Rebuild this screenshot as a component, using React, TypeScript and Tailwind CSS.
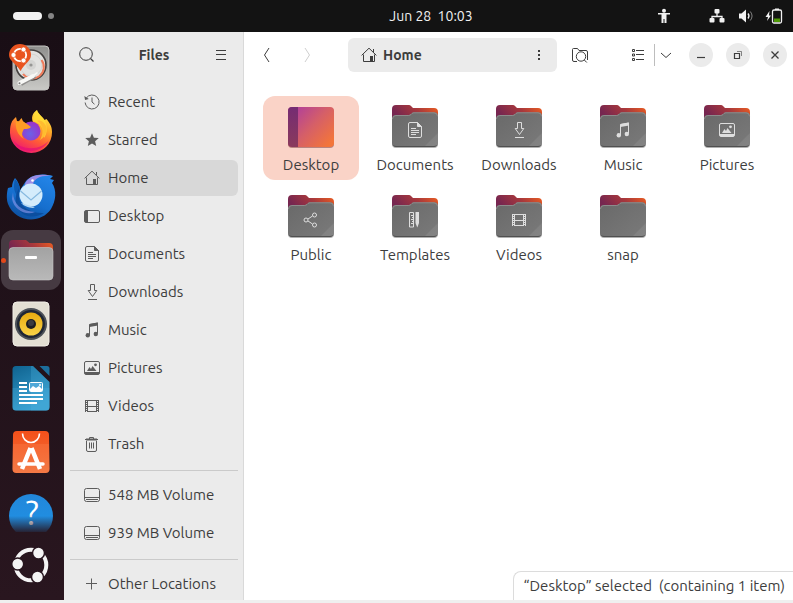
import React from "react";

type SymbolName =
  | "recent" | "star" | "home" | "desktop" | "document" | "download" | "music"
  | "picture" | "video" | "trash" | "drive" | "plus" | "share" | "template"
  | "search" | "menu" | "back" | "forward" | "dots" | "folderSearch" | "list"
  | "down" | "minimize" | "restore" | "close" | "person" | "network" | "sound" | "battery";

const glyphs: Record<SymbolName, React.ReactNode> = {
  recent: (
    <>
      <path d="M2.2 4.2A7 7 0 1 1 1.1 8.5" />
      <path d="M8 3.5V8l2.5 2.2" />
      <path d="M.3 2l.8 4 3.7-.9z" fill="currentColor" stroke="none" />
    </>
  ),
  star: <path d="M8 1.2l1.9 4.5 4.9.4-3.7 3.2 1.1 4.8L8 11.6l-4.2 2.5 1.1-4.8L1.2 6.1l4.9-.4z" fill="currentColor" stroke="none" />,
  home: (
    <>
      <path d="M.6 8.4L8 1.2l7.4 7.2" />
      <path d="M2.5 7.5v7h11v-7" />
      <path d="M12.5 2v3" />
      <path d="M9 9h3v5.5H9z" fill="currentColor" stroke="none" />
    </>
  ),
  desktop: (
    <>
      <rect x=".5" y="2.5" width="15" height="12" rx="1.5" />
      <path d="M1 3h3v11H1z" fill="currentColor" stroke="none" />
    </>
  ),
  document: (
    <>
      <path d="M3 .5h7.5l4 4V14a1.5 1.5 0 0 1-1.5 1.5H3A1.5 1.5 0 0 1 1.5 14V2A1.5 1.5 0 0 1 3 .5z" />
      <path d="M10.5 .5V4.5h4z" fill="currentColor" />
      <path d="M4 6.5h5M4 8.5h8M4 10.5h8M4 12.5h5" />
    </>
  ),
  download: (
    <>
      <path d="M6.5 .5h4v6h2.3L8.5 12.5 4.2 6.5h2.3z" />
      <path d="M4 15.5h9" />
    </>
  ),
  music: (
    <>
      <path d="M5.5 13V2.5l8-1.5v10.5" />
      <path d="M5.5 1.9l8.5-1.4v3l-8.5 1.4z" fill="currentColor" stroke="none" />
      <circle cx="3.8" cy="13.2" r="2.2" fill="currentColor" stroke="none" />
      <circle cx="11.8" cy="12" r="2.2" fill="currentColor" stroke="none" />
    </>
  ),
  picture: (
    <>
      <rect x=".5" y="1.5" width="15" height="13" rx="1.5" />
      <path d="M1 12h14v2H1zM3 11l2.5-4L7 9l1.5-3 4 5z" fill="currentColor" stroke="none" />
      <circle cx="11.5" cy="4.8" r="1.4" fill="currentColor" stroke="none" />
    </>
  ),
  video: (
    <>
      <path d="M4 2.5h8M4 8.5h8M4 13.5h8M3.5 2v12M12.5 2v12M1.5 2v12M14.5 2v12" />
      <path d="M2.5 2v12M13.5 2v12" strokeDasharray="1 1" />
    </>
  ),
  trash: (
    <>
      <path d="M2.5 5v9A1.5 1.5 0 0 0 4 15.5h7a1.5 1.5 0 0 0 1.5-1.5V5" />
      <path d="M1 3.5h13M5.5 3V1.5h4V3M5.5 6.5v6M7.5 6.5v6M9.5 6.5v6" />
      <path d="M2 2.5h11v2H2z" fill="currentColor" stroke="none" />
    </>
  ),
  drive: (
    <>
      <rect x=".5" y="1.5" width="15" height="13" rx="2" />
      <path d="M1 10.5h14M2 12.5h12" />
    </>
  ),
  plus: <path d="M7.5 2.5v11M2 7.5h11" />,
  share: (
    <>
      <circle cx="3" cy="8" r="2" />
      <circle cx="11.5" cy="3" r="2" />
      <circle cx="11.5" cy="13" r="2" />
      <path d="M5 7l4.5-3M5 9l4.5 3" />
    </>
  ),
  template: (
    <>
      <path d="M2.5 .5h4v14.5h-4zM4 3.5h2.5M5 5.5h1.5M4 7.5h2.5M5 9.5h1.5M4 11.5h2.5" />
      <path d="M8.5 0H12v11l-1.7 4.5L8.5 11z" fill="currentColor" stroke="none" />
    </>
  ),
  search: (
    <>
      <circle cx="7" cy="7" r="6.3" />
      <path d="M11.5 11.5l3 3" strokeWidth="1.3" />
    </>
  ),
  menu: <path d="M3 3.5h10M3 7.5h10M3 12.5h10" />,
  back: <path d="M10 1L5.5 8l4.5 7" />,
  forward: <path d="M6 1l4.5 7L6 15" />,
  dots: <path d="M7 3h2v2H7zM7 7h2v2H7zM7 11h2v2H7z" fill="currentColor" stroke="none" />,
  folderSearch: (
    <>
      <path d="M5 14.5H2A1.5 1.5 0 0 1 .5 13V2.5a1 1 0 0 1 1-1h4l1.5 2h7A1.5 1.5 0 0 1 15.5 5v8" />
      <circle cx="9" cy="9.5" r="4.7" />
      <path d="M12.3 13l2.5 2.5" />
    </>
  ),
  list: (
    <path d="M2.5 2.5h2v2h-2zM2.5 7h2v2h-2zM2.5 11.5h2v2h-2zM6 3.5h8M6 7.5h8M6 12.5h8" />
  ),
  down: <path d="M3 6l5 4.5L13 6" />,
  minimize: <path d="M4 10.5h8" strokeWidth="1.2" />,
  restore: (
    <>
      <path d="M4.5 6.5h5v5h-5z" strokeWidth="1.2" />
      <path d="M7 4.5h4.5V9" opacity=".6" />
    </>
  ),
  close: <path d="M4.5 4.5l7 7M11.5 4.5l-7 7" strokeWidth="1.3" />,
  person: (
    <>
      <circle cx="8" cy="2.8" r="2" fill="currentColor" stroke="none" />
      <path d="M2 5h12v1.5h-3.5V15h-2v-4h-1v4h-2V6.5H2z" fill="currentColor" stroke="none" />
    </>
  ),
  network: (
    <>
      <path d="M8 5v3M3 11V8.5h10V11" strokeWidth="1.3" />
      <rect x="5.5" y="1" width="5" height="4.5" rx="1" fill="currentColor" stroke="none" />
      <rect x=".5" y="10" width="5" height="4.5" rx="1" fill="currentColor" stroke="none" />
      <rect x="10.5" y="10" width="5" height="4.5" rx="1" fill="currentColor" stroke="none" />
    </>
  ),
  sound: (
    <>
      <path d="M1 5.5h2.5L8 1.5v13l-4.5-4H1z" fill="currentColor" stroke="none" />
      <path d="M10 5.5q2 2.5 0 5" strokeWidth="1.3" />
      <path d="M12.3 3.5q3.5 4.5 0 9" opacity=".5" />
    </>
  ),
  battery: (
    <>
      <path d="M2.5 3l-4 6h2.500L0 13l4-5.5H2z" fill="currentColor" stroke="none" />
      <rect x="5.500" y="2" width="9" height="13" rx="1.5" strokeWidth="1.3" />
      <path d="M8 .5h4V2H8z" fill="currentColor" stroke="none" />
      <path d="M7 10.500h6V14H7z" fill="#4e9a06" stroke="none" />
    </>
  ),
};

function Icon({ name, x, y }: { name: SymbolName; x?: number; y?: number }) {
  return (
    <svg x={x} y={y} width="16" height="16" viewBox="0 0 16 16" fill="none" stroke="currentColor" strokeWidth="1" aria-hidden="true" className="shrink-0 overflow-visible">
      {glyphs[name]}
    </svg>
  );
}

function Gradients() {
  return (
    <svg width="0" height="0" className="absolute" aria-hidden="true">
      <defs>
        <linearGradient id="folderBack" x1="0" y1=".3" x2="1" y2="0">
          <stop offset="0" stopColor="#762650" />
          <stop offset=".5" stopColor="#a8383c" />
          <stop offset="1" stopColor="#f0601f" />
        </linearGradient>
        <linearGradient id="folderFront" x1="0" y1="0" x2="1" y2="1">
          <stop offset="0" stopColor="#696969" />
          <stop offset="1" stopColor="#7a7a7a" />
        </linearGradient>
        <linearGradient id="desk" x1="0" y1="0" x2="1" y2=".8">
          <stop offset=".1" stopColor="#b03f9b" />
          <stop offset=".55" stopColor="#d55f68" />
          <stop offset="1" stopColor="#f3753a" />
        </linearGradient>
        <linearGradient id="deskSide" x1="0" y1="0" x2="0" y2="1">
          <stop offset="0" stopColor="#752c73" />
          <stop offset="1" stopColor="#8a3a5c" />
        </linearGradient>
        <linearGradient id="metal" x1="0" y1="0" x2="0" y2="1">
          <stop offset="0" stopColor="#8f8f8d" />
          <stop offset="1" stopColor="#c9c9c6" />
        </linearGradient>
        <linearGradient id="dockFolder" x1="0" y1="0" x2="0" y2="1">
          <stop offset="0" stopColor="#a2a2a2" />
          <stop offset="1" stopColor="#b9b9b9" />
        </linearGradient>
        <linearGradient id="fox" x1=".8" y1="0" x2=".3" y2="1">
          <stop offset="0" stopColor="#fff04a" />
          <stop offset=".35" stopColor="#ffab28" />
          <stop offset=".65" stopColor="#ff5a38" />
          <stop offset="1" stopColor="#ee1474" />
        </linearGradient>
        <radialGradient id="globe" cx=".45" cy=".65" r=".6">
          <stop offset="0" stopColor="#6a62e8" />
          <stop offset="1" stopColor="#9a35c9" />
        </radialGradient>
        <linearGradient id="bird" x1=".8" y1="0" x2=".3" y2="1">
          <stop offset="0" stopColor="#2385e8" />
          <stop offset=".6" stopColor="#166fce" />
          <stop offset="1" stopColor="#0d4f9e" />
        </linearGradient>
        <linearGradient id="writer" x1="0" y1="0" x2=".4" y2="1">
          <stop offset="0" stopColor="#0f6390" />
          <stop offset="1" stopColor="#349ccd" />
        </linearGradient>
        <linearGradient id="bag" x1="0" y1="0" x2="0" y2="1">
          <stop offset="0" stopColor="#f4501a" />
          <stop offset="1" stopColor="#f0733f" />
        </linearGradient>
        <linearGradient id="yellow" x1="0" y1="0" x2="0" y2="1">
          <stop offset="0" stopColor="#e8ab10" />
          <stop offset="1" stopColor="#f9d347" />
        </linearGradient>
        <linearGradient id="help" gradientUnits="userSpaceOnUse" x1="0" y1="8" x2="0" y2="48">
          <stop offset="0" stopColor="#2287da" />
          <stop offset=".55" stopColor="#218de0" />
          <stop offset="1" stopColor="#27151f" />
        </linearGradient>
        <linearGradient id="helpMark" gradientUnits="userSpaceOnUse" x1="0" y1="28" x2="0" y2="46">
          <stop offset="0" stopColor="#ffffff" />
          <stop offset="1" stopColor="#4a3c44" />
        </linearGradient>
      </defs>
    </svg>
  );
}

const dockArt: { label: string; art: React.ReactNode; active?: boolean }[] = [
  {
    label: "Install Ubuntu",
    art: (
      <>
        <rect x="12" y="8" width="36" height="44" rx="4" fill="url(#metal)" stroke="#c5c5c2" />
        <circle cx="30" cy="27" r="15" fill="#e2e2e0" stroke="#43403f" strokeWidth="1.6" />
        <circle cx="30" cy="27" r="11" fill="none" stroke="#d0d0ce" strokeWidth=".8" />
        <path d="M40.5 22A11.5 11.5 0 0 1 22 36" fill="none" stroke="#ee7b5b" strokeWidth="2" />
        <circle cx="30" cy="27" r="5" fill="#d4d4d2" />
        <circle cx="30" cy="27" r="1.6" fill="#969694" />
        <path d="M34 38L20 46" stroke="#908f8d" strokeWidth="4" />
        <path d="M32 38L18.5 45" stroke="#f8f8f6" strokeWidth="4" strokeLinecap="round" />
        <path d="M36 35l-4 3" stroke="#f8f8f6" strokeWidth="1.6" strokeLinecap="round" />
        <circle cx="18.5" cy="45.3" r="1" fill="#777" />
        <path d="M19 6a11 11 0 0 1 11 11c0 6-6 8-10.5 16C15 25 8 23 8 17A11 11 0 0 1 19 6z" fill="#e95420" />
        <circle cx="19" cy="17" r="6.2" fill="none" stroke="#fff" strokeWidth="1.8" />
        <g fill="#fff" stroke="#e95420" strokeWidth=".7">
          <circle cx="12.5" cy="17" r="2.5" />
          <circle cx="22.5" cy="11.5" r="2.5" />
          <circle cx="22.5" cy="22.5" r="2.5" />
        </g>
      </>
    ),
  },
  {
    label: "Firefox",
    art: (
      <>
        <path d="M10 22c1-4 4-6 5-7l1.5 6 4-5c1 2 1.5 4 4 5h8c-3-5-1-10 3.5-13 1 4 5 6 7.5 10l2-1c4 5 5.5 8 5.5 13A21 20.5 0 0 1 9 31c0-3 0-6 1-9z" fill="url(#fox)" />
        <path d="M32 19c0-4 1-8 4-11 1 4 6 7 8 11s3 12-1 17c0-5-1-11-6-15z" fill="#ffdf37" opacity=".75" />
        <circle cx="30" cy="29" r="9.5" fill="url(#globe)" />
        <path d="M15 19c5 0 8 1 11 3l4 3c-2 2-4 2-7 2-2 3-3 7 0 10-7-4-9-12-8-18z" fill="#ff9c25" />
        <path d="M36 19c5 3 8 10 3 19 6-3 9-12 4-17-2-2-4-3-7-2z" fill="#ffbc30" />
        <path d="M12 38c8 11 28 11 36 0-6 14-30 15-36 0z" fill="#e3087c" opacity=".6" />
      </>
    ),
  },
  {
    label: "Thunderbird",
    art: (
      <>
        <path d="M14 12c3 3 5 8 5 12l4-6C27 10 38 6 52 10l-3 3 4 1-2 3c5 7 4 18-1 26C39 59 14 56 7 38 5 32 6 26 7 22l4-1c0-3 1-6 3-9z" fill="url(#bird)" />
        <path d="M24 18c3-8 14-11 27-8-11-1-17 2-19 8-2 4-6 2-8 5z" fill="#9b8ce4" />
        <path d="M14 13c-2 8-1 13 3 18l2-7c0-4-2-8-5-11z" fill="#0e5bb2" />
        <path d="M18 22c-5 9-5 19 4 26 7 4 15 3 21-1-13 1-24-6-25-16z" fill="#0b4e9f" />
        <path d="M12 26c0 12 8 19 22 20-9 4-21-2-23-13z" fill="#8e9aee" opacity=".6" />
        <circle cx="30" cy="29" r="11.5" fill="#d4ecfb" />
        <path d="M19.5 25L30 34l10.5-9" fill="none" stroke="#86b9df" strokeWidth="1.2" />
        <path d="M20 37c4 4 9 5 14 5l-4-2z" fill="#b5d9f4" />
        <circle cx="31.5" cy="14.5" r="1.3" fill="#fff" />
      </>
    ),
  },
  {
    label: "Files",
    active: true,
    art: (
      <>
        <path d="M8 24V14a4 4 0 0 1 4-4h13l3.5 3H48a4 4 0 0 1 4 4v9z" fill="url(#folderBack)" />
        <path d="M12 17.5h36a4 4 0 0 1 4 4V46a4 4 0 0 1-4 4H12a4 4 0 0 1-4-4V21.5a4 4 0 0 1 4-4z" fill="url(#dockFolder)" stroke="#c8c8c8" strokeWidth=".6" />
        <rect x="24" y="26" width="12" height="3" rx="1" fill="#fff" />
      </>
    ),
  },
  {
    label: "Rhythmbox",
    art: (
      <>
        <rect x="12" y="8" width="36" height="44" rx="4" fill="#e3dfd3" stroke="#f2efe7" />
        <circle cx="30" cy="30" r="16" fill="#4c5157" />
        <circle cx="30" cy="30" r="14" fill="#202735" />
        <circle cx="30" cy="30" r="11.5" fill="url(#yellow)" />
        <circle cx="30" cy="30" r="5" fill="#1d1e22" />
        <circle cx="30" cy="29" r="3" fill="#3b3c40" />
      </>
    ),
  },
  {
    label: "LibreOffice Writer",
    art: (
      <>
        <path d="M15 8h17l16.5 16v25a3.5 3.5 0 0 1-3.5 3.5H15A3.5 3.5 0 0 1 11.5 49V11.5A3.5 3.5 0 0 1 15 8z" fill="url(#writer)" />
        <path d="M30 8h2l16.5 16v25a3.5 3.5 0 0 1-3.5 3.5H30z" fill="#4db0da" opacity=".3" />
        <path d="M11.5 30h37v19a3.5 3.5 0 0 1-3.5 3.5H15a3.5 3.5 0 0 1-3.5-3.5z" fill="#4fb4e4" opacity=".25" />
        <path d="M38.5 8H46a2.5 2.5 0 0 1 2.5 2.5V18z" fill="#1c6e9c" />
        <path d="M18 25h8M18 29h8M18 33h8M18 37h24M18 41h24M18 45h18" stroke="#fff" strokeWidth="2" />
        <rect x="28.5" y="24.5" width="13" height="9" rx="1" fill="#4fa8d8" stroke="#fff" />
        <path d="M29 33v-2l3-3 3 2 3-2 3 3v2z" fill="#fff" />
        <circle cx="39" cy="27" r="1" fill="#fff" />
      </>
    ),
  },
  {
    label: "App Center",
    art: (
      <>
        <path d="M16 9h28a4 4 0 0 1 4 4l.5 34a4 4 0 0 1-4 4h-29a4 4 0 0 1-4-4L12 13a4 4 0 0 1 4-4z" fill="url(#bag)" />
        <path d="M12 22h36l.5 25a4 4 0 0 1-4 4h-29a4 4 0 0 1-4-4z" fill="#ff8d58" opacity=".25" />
        <path d="M21.5 11.5a8.5 9 0 0 0 17 0" fill="none" stroke="#fff" strokeWidth="1.6" />
        <path d="M29.5 26L21 47M30.5 26L39 47" stroke="#fff" strokeWidth="4.5" />
        <path d="M18 42h24" stroke="#fff" strokeWidth="3.5" strokeLinecap="round" />
      </>
    ),
  },
  {
    label: "Help",
    art: (
      <>
        <circle cx="30" cy="30" r="22" fill="url(#help)" />
        <text x="31" y="39" textAnchor="middle" fontSize="34" fill="url(#helpMark)" className="font-['Ubuntu','Noto_Sans',sans-serif]">?</text>
      </>
    ),
  },
];

const places: { label: string; icon: SymbolName }[] = [
  { label: "Recent", icon: "recent" },
  { label: "Starred", icon: "star" },
  { label: "Home", icon: "home" },
  { label: "Desktop", icon: "desktop" },
  { label: "Documents", icon: "document" },
  { label: "Downloads", icon: "download" },
  { label: "Music", icon: "music" },
  { label: "Pictures", icon: "picture" },
  { label: "Videos", icon: "video" },
  { label: "Trash", icon: "trash" },
];

const folders: { label: string; emblem?: SymbolName }[] = [
  { label: "Desktop" },
  { label: "Documents", emblem: "document" },
  { label: "Downloads", emblem: "download" },
  { label: "Music", emblem: "music" },
  { label: "Pictures", emblem: "picture" },
  { label: "Public", emblem: "share" },
  { label: "Templates", emblem: "template" },
  { label: "Videos", emblem: "video" },
  { label: "snap" },
];

function TopBar() {
  return (
    <header className="flex h-8 shrink-0 items-center bg-[#131313] text-sm text-[#f2f2f2]">
      <div className="flex w-[207px] items-center gap-1.5 pl-[13px]">
        <span className="h-2 w-[29px] rounded-full bg-[#f2f2f2]" />
        <span className="size-1.5 rounded-full bg-[#858585]" />
      </div>
      <button className="flex-1 whitespace-pre text-center">Jun 28  10:03</button>
      <div className="flex w-[138px] items-center justify-end pr-2.5">
        <button aria-label="Accessibility" className="mr-[37px]"><Icon name="person" /></button>
        <button aria-label="System" className="flex gap-[13px]">
          <Icon name="network" />
          <Icon name="sound" />
          <Icon name="battery" />
        </button>
      </div>
    </header>
  );
}

function Dock() {
  return (
    <nav className="flex w-16 shrink-0 flex-col bg-linear-to-b from-[#190e15] to-[#29161f]" aria-label="Dock">
      <div className="flex min-h-0 flex-1 flex-col gap-1 overflow-hidden px-px pt-1.5">
        {dockArt.map((app) => (
          <button key={app.label} aria-label={app.label} className={`relative size-[60px] shrink-0 rounded-xl ${app.active ? "bg-[#463a42]" : ""}`}>
            {app.active && <span className="absolute top-7 left-0 size-[5px] rounded-full bg-[#e2481a]" />}
            <svg width="60" height="60" viewBox="0 0 60 60" aria-hidden="true">{app.art}</svg>
          </button>
        ))}
      </div>
      <button aria-label="Show Apps" className="flex h-[68px] shrink-0 items-center pb-0.5 pl-px">
        <svg width="60" height="60" viewBox="0 0 60 60" aria-hidden="true">
          <circle cx="30" cy="30" r="15.3" fill="none" stroke="#f4f4f4" strokeWidth="4" />
          <g fill="#f4f4f4" stroke="#27151e" strokeWidth="1.5">
            <circle cx="37.5" cy="18" r="6" />
            <circle cx="16.7" cy="29" r="6" />
            <circle cx="36.5" cy="42" r="6" />
          </g>
        </svg>
      </button>
    </nav>
  );
}

function PlaceRow({ label, icon, selected }: { label: string; icon: SymbolName; selected?: boolean }) {
  return (
    <li>
      <button className={`flex h-9 w-full items-center gap-2 rounded-md pl-3.5 text-left whitespace-nowrap ${selected ? "bg-[#d8d8d8]" : ""}`}>
        <span className="text-[#5c5c5c]"><Icon name={icon} /></span>
        {label}
      </button>
    </li>
  );
}

function Sidebar() {
  return (
    <aside className="flex w-[180px] shrink-0 flex-col overflow-hidden border-r border-[#d9d9d9] bg-[#ebebeb]">
      <div className="flex h-[46px] shrink-0 items-center justify-between pr-[5px] pl-1.5">
        <button aria-label="Search" className="grid size-[34px] place-items-center"><Icon name="search" /></button>
        <h1 className="text-sm font-bold">Files</h1>
        <button aria-label="Main menu" className="grid size-[34px] place-items-center"><Icon name="menu" /></button>
      </div>
      <div className="flex min-h-0 flex-col pt-1.5 pr-[5px] pl-1.5">
        <ul className="flex flex-col gap-0.5">
          {places.map((p) => <PlaceRow key={p.label} {...p} selected={p.label === "Home"} />)}
        </ul>
        <hr className="mt-2 mb-1.5 border-[#cacaca]" />
        <ul className="flex flex-col gap-0.5">
          <PlaceRow label="548 MB Volume" icon="drive" />
          <PlaceRow label="939 MB Volume" icon="drive" />
        </ul>
        <hr className="mt-2 mb-1.5 border-[#cacaca]" />
        <ul><PlaceRow label="Other Locations" icon="plus" /></ul>
      </div>
    </aside>
  );
}

function HeaderBar() {
  return (
    <div className="flex h-[46px] shrink-0 items-center px-1.5">
      <button aria-label="Back" className="grid size-[34px] place-items-center"><Icon name="back" /></button>
      <button aria-label="Forward" disabled className="ml-1.5 grid size-[34px] place-items-center text-[#cfcfcf]"><Icon name="forward" /></button>
      <div className="ml-6 flex h-[34px] flex-1 items-center justify-between rounded-md bg-[#ebebeb]">
        <button className="flex items-center gap-1.5 pl-[13px] text-sm font-bold"><Icon name="home" />Home</button>
        <button aria-label="Folder menu" className="grid size-9 place-items-center"><Icon name="dots" /></button>
      </div>
      <button aria-label="Search folder" className="ml-1.5 grid size-[34px] place-items-center"><Icon name="folderSearch" /></button>
      <div className="ml-6 flex h-[34px] items-center">
        <button aria-label="List view" className="grid w-[33px] place-items-center"><Icon name="list" /></button>
        <span className="h-[22px] w-px bg-[#bdbdbd]" />
        <button aria-label="View options" className="grid w-[22px] place-items-center"><Icon name="down" /></button>
      </div>
      <div className="ml-3 flex gap-[13px]">
        <button aria-label="Minimize" className="grid size-6 place-items-center rounded-full bg-[#ebebeb]"><Icon name="minimize" /></button>
        <button aria-label="Restore" className="grid size-6 place-items-center rounded-full bg-[#ebebeb]"><Icon name="restore" /></button>
        <button aria-label="Close" className="grid size-6 place-items-center rounded-full bg-[#ebebeb]"><Icon name="close" /></button>
      </div>
    </div>
  );
}

function FolderArt({ emblem }: { emblem?: SymbolName }) {
  return (
    <svg width="48" height="48" viewBox="0 0 48 48" className="text-[#dedede]" aria-hidden="true">
      <path d="M1 18V7a4 4 0 0 1 4-4h13a3 3 0 0 1 2 1l2 2h21a4 4 0 0 1 4 4v8z" fill="url(#folderBack)" />
      <path d="M1 30v12a4 4 0 0 0 4 4h38a4 4 0 0 0 4-4V30z" fill="#b0b0b0" />
      <path d="M1 17a4 4 0 0 1 4-4h12.5a4 4 0 0 0 2.5-1l1-1a3 3 0 0 1 2-.7h20a4 4 0 0 1 4 4V41a4 4 0 0 1-4 4H5a4 4 0 0 1-4-4z" fill="url(#folderFront)" />
      <path d="M47 31v10a4 4 0 0 1-4 4H33z" fill="#fff" opacity=".08" />
      <path d="M1.5 17A3.5 3.5 0 0 1 5 13.5h12.5a4 4 0 0 0 2.5-1l1-1a3 3 0 0 1 2-.7h20a3.5 3.5 0 0 1 3.5 3.5" fill="none" stroke="#949494" strokeWidth=".8" />
      <path d="M2.5 43.5q1 1 2.5 1h38q1.5 0 2.5-1" fill="none" stroke="#505050" />
      {emblem && <Icon name={emblem} x={16} y={20} />}
    </svg>
  );
}

function DesktopArt() {
  return (
    <svg width="48" height="48" viewBox="0 0 48 48" aria-hidden="true">
      <rect x="1" y="6" width="46" height="40" rx="4" fill="#b98480" />
      <rect x="1" y="5" width="46" height="40" rx="4" fill="url(#desk)" />
      <path d="M5 5h6v40H5a4 4 0 0 1-4-4V9a4 4 0 0 1 4-4z" fill="url(#deskSide)" />
    </svg>
  );
}

export default function App() {
  return (
    <div className="flex h-screen flex-col overflow-hidden border-b-[3px] border-[#efefef] bg-white font-['Ubuntu','Noto_Sans',sans-serif] text-[15px] leading-5 text-[#3d3d3d]">
      <Gradients />
      <TopBar />
      <div className="flex min-h-0 flex-1">
        <Dock />
        <Sidebar />
        <main className="relative flex min-w-0 flex-1 flex-col">
          <HeaderBar />
          <ul className="grid grid-cols-[repeat(auto-fill,96px)] gap-x-2 gap-y-1.5 pt-[18px] pr-[18px] pl-[19px]">
            {folders.map((f) => (
              <li key={f.label}>
                <button className={`flex h-[84px] w-full flex-col items-center gap-[5px] rounded-xl pt-1.5 ${f.label === "Desktop" ? "bg-[#fad3c7]" : ""}`}>
                  {f.label === "Desktop" ? <DesktopArt /> : <FolderArt emblem={f.emblem} />}
                  {f.label}
                </button>
              </li>
            ))}
          </ul>
          <p className="absolute right-0 bottom-0 h-[29px] rounded-tl-lg border-t border-l border-[#dcdcdc] bg-white pt-1 pr-2 pl-2.5 whitespace-pre">“Desktop” selected  (containing 1 item)</p>
        </main>
      </div>
    </div>
  );
}
